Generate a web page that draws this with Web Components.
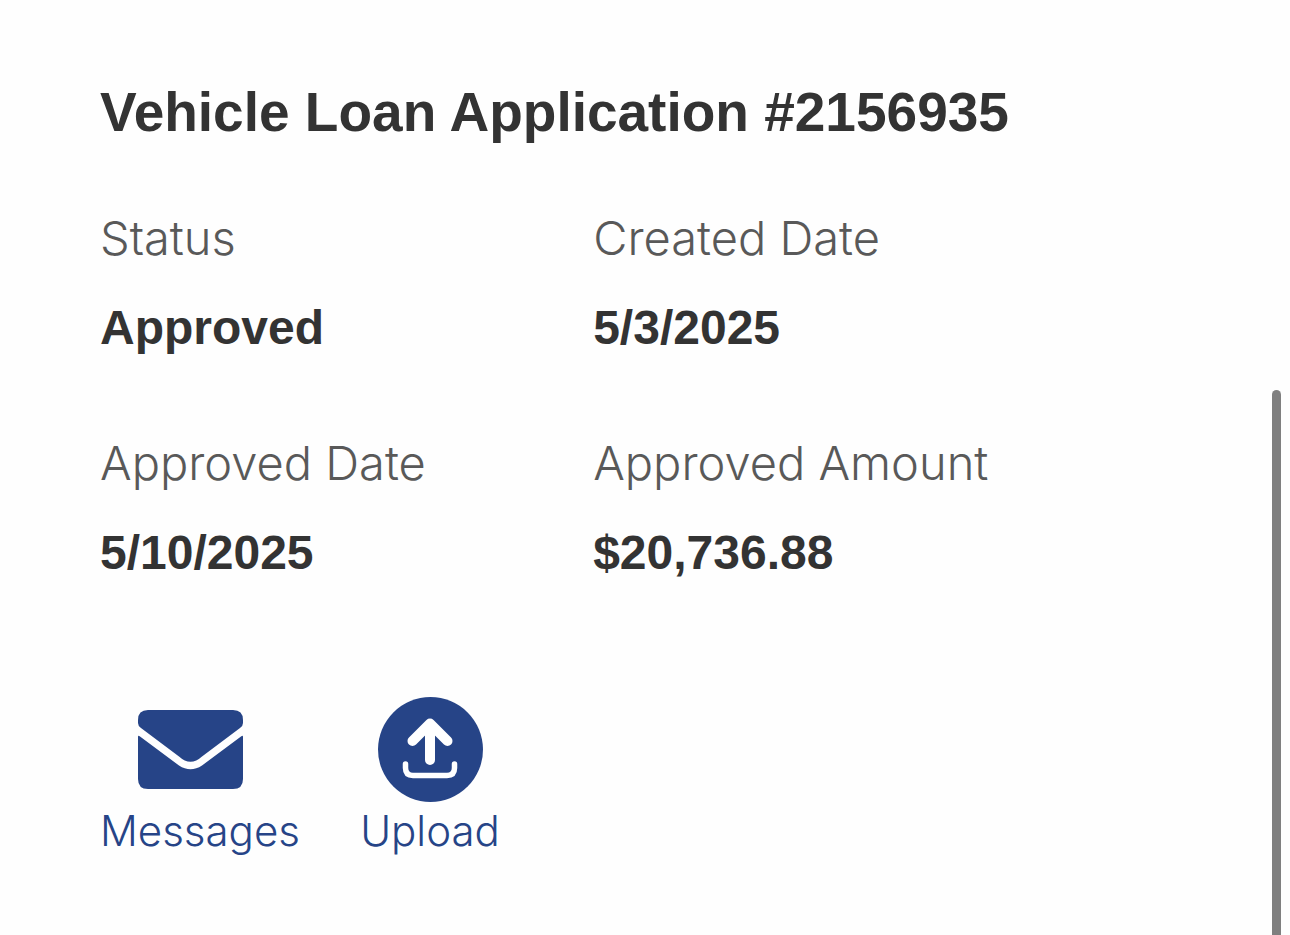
<!DOCTYPE html>
<html lang="en">
<head>
<meta charset="utf-8">
<meta name="viewport" content="width=device-width, initial-scale=1">
<title>Vehicle Loan Application</title>
<style>
  body {
    margin: 0;
    background: #fefefe;
    color: #333;
    font-family: "Liberation Sans", Arial, Helvetica, sans-serif;
  }
</style>
</head>
<body>
<loan-card>
  <span slot="title">Vehicle Loan Application #2156935</span>
  <loan-field label="Status">Approved</loan-field>
  <loan-field label="Created Date">5/3/2025</loan-field>
  <loan-field label="Approved Date">5/10/2025</loan-field>
  <loan-field label="Approved Amount">$20,736.88</loan-field>
  <icon-link slot="actions" href="#messages" label="Messages">
    <svg width="105" height="105" viewBox="0 0 105 105" fill="#264487" aria-hidden="true">
      <path d="M10 13H95Q105 13 105 23V26Q105 29 102 31L64 59.500Q52.500 70 41 59.500L3 31Q0 29 0 26V23Q0 13 10 13Z"/>
      <path d="M0 40Q0 38 2 39.500L41 68.500Q52.500 76 64 68.500L103 39.500Q105 38 105 40V82Q105 92 95 92H10Q0 92 0 82Z"/>
    </svg>
  </icon-link>
  <icon-link slot="actions" href="#upload" label="Upload">
    <svg width="105" height="105" viewBox="0 0 105 105" fill="none" stroke="#fff" stroke-linecap="round" stroke-linejoin="round" aria-hidden="true">
      <circle cx="52.500" cy="52.500" r="52.500" fill="#264487" stroke="none"/>
      <path d="M52 63V27M34.500 44L52 26.500L69.500 44" stroke-width="10"/>
      <path d="M27.500 67V71Q27.500 78.500 35 78.500H69Q76.500 78.500 76.500 71V67" stroke-width="5.500"/>
    </svg>
  </icon-link>
</loan-card>
<scroll-thumb></scroll-thumb>

<script>
  class LoanCard extends HTMLElement {
    constructor() {
      super();
      this.attachShadow({ mode: "open" }).innerHTML = `
        <style>
          :host { display: block; padding: 76px 105px 60px 100px; }
          h1 { margin: 0 0 52px; font-size: 55px; line-height: 72px; font-weight: 700; }
          .fields { display: grid; grid-template-columns: 5fr 6fr; row-gap: 60px; }
          nav { display: flex; gap: 60px; margin-top: 107px; }
        </style>
        <h1><slot name="title"></slot></h1>
        <div class="fields"><slot></slot></div>
        <nav aria-label="Application actions"><slot name="actions"></slot></nav>`;
    }
  }

  class LoanField extends HTMLElement {
    constructor() {
      super();
      this.attachShadow({ mode: "open" }).innerHTML = `
        <style>
          :host { display: block; }
          dl, dd { margin: 0; }
          dl { display: grid; row-gap: 15px; line-height: 75px; white-space: nowrap; }
          dt { color: #595959; font-family: Inter, "Liberation Sans", sans-serif; font-size: 47px; font-weight: 300; }
          dd { font-size: 48px; font-weight: 700; }
        </style>
        <dl><dt></dt><dd><slot></slot></dd></dl>`;
    }
    connectedCallback() {
      this.shadowRoot.querySelector("dt").textContent = this.getAttribute("label");
    }
  }

  class IconLink extends HTMLElement {
    constructor() {
      super();
      this.attachShadow({ mode: "open" }).innerHTML = `
        <style>
          :host { display: block; width: 180px; }
          a { display: flex; flex-direction: column; color: #264487; text-decoration: none; }
          ::slotted(svg) { display: block; align-self: center; }
          .label { font-family: Inter, "Liberation Sans", sans-serif; font-weight: 300;
                   font-size: 42px; line-height: 58px; text-align: center; white-space: nowrap; }
        </style>
        <a><slot></slot><span class="label"></span></a>`;
    }
    connectedCallback() {
      this.shadowRoot.querySelector("a").href = this.getAttribute("href");
      this.shadowRoot.querySelector(".label").textContent = this.getAttribute("label");
    }
  }

  class ScrollThumb extends HTMLElement {
    constructor() {
      super();
      this.attachShadow({ mode: "open" }).innerHTML = `
        <style>
          :host { position: fixed; top: 390px; right: 9px; bottom: 0; width: 9px;
                  background: #7f7f7f; border-radius: 5px 5px 0 0; }
        </style>`;
    }
  }

  customElements.define("loan-card", LoanCard);
  customElements.define("loan-field", LoanField);
  customElements.define("icon-link", IconLink);
  customElements.define("scroll-thumb", ScrollThumb);
</script>
</body>
</html>
